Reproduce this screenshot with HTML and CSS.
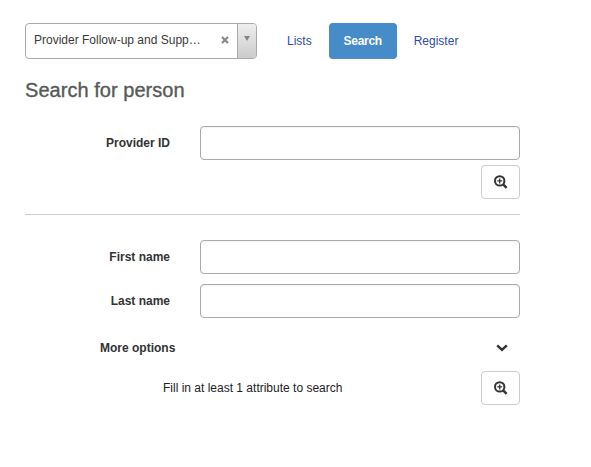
FILE: index.html
```html
<!DOCTYPE html>
<html lang="en">
<head>
<meta charset="utf-8">
<title>Search for person</title>
<link rel="stylesheet" href="styles.css">
</head>
<body>
<svg class="defs" width="0" height="0" aria-hidden="true">
  <symbol id="zoom-in" viewBox="0 0 14 14">
    <circle cx="5.7" cy="5.9" r="4.7" fill="none" stroke="currentColor" stroke-width="2"/>
    <path d="M9.2 9.4L12.6 12.8" fill="none" stroke="currentColor" stroke-width="2.5"/>
    <path d="M5.7 3.4V8.4M3.2 5.9H8.2" fill="none" stroke="currentColor" stroke-width="1.3"/>
  </symbol>
</svg>
<main class="page">
  <header class="toolbar">
    <div class="select">
      <span class="select-value">Provider Follow-up and Supp…</span>
      <svg class="select-clear" width="8" height="8" viewBox="0 0 8 8"><path d="M1 1L7 7M7 1L1 7" stroke="#888" stroke-width="2.2"/></svg>
      <span class="select-arrow"><svg width="6" height="5" viewBox="0 0 6 5"><path d="M0 0H6L3 5Z" fill="#858585"/></svg></span>
    </div>
    <nav class="tabs">
      <a class="tab tab-lists">Lists</a>
      <a class="tab tab-active">Search</a>
      <a class="tab tab-register">Register</a>
    </nav>
  </header>
  <h1 class="title">Search for person</h1>
  <form class="form">
    <div class="row"><label class="label" for="pid">Provider ID</label><input class="input" id="pid"></div>
    <div class="actions"><button class="button" type="button" aria-label="Search"><svg width="14" height="14"><use href="#zoom-in"/></svg></button></div>
    <hr class="divider">
    <div class="row"><label class="label" for="first">First name</label><input class="input" id="first"></div>
    <div class="row"><label class="label" for="last">Last name</label><input class="input" id="last"></div>
    <div class="more"><span>More options</span><svg width="12" height="8" viewBox="0 0 12 8"><path d="M1.2 1.3L6 5.8L10.8 1.3" fill="none" stroke="#333" stroke-width="2.5"/></svg></div>
    <div class="actions actions-last"><span class="hint">Fill in at least 1 attribute to search</span><button class="button" type="button" aria-label="Search"><svg width="14" height="14"><use href="#zoom-in"/></svg></button></div>
  </form>
</main>
</body>
</html>
```
FILE: styles.css
```css
* { box-sizing: border-box; }
body {
  margin: 0;
  background: #fff;
  color: #333;
  font: 12px/17px "Liberation Sans", Arial, sans-serif;
}
.defs { display: block; }
.page { width: 495px; margin-left: 25px; padding-top: 23px; }
.toolbar { display: flex; height: 36px; }
.select {
  display: flex;
  align-items: center;
  width: 232px;
  border: 1px solid #aaa;
  border-radius: 4px;
  overflow: hidden;
}
.select-value { width: 187px; padding: 0 0 2px 8px; color: #3a3a3a; white-space: nowrap; }
.select-clear { margin-left: 8px; margin-top: -3px; }
.select-arrow {
  display: flex;
  justify-content: center;
  width: 19px;
  height: 100%;
  margin-left: auto;
  padding-top: 12px;
  border-left: 1px solid #aaa;
  background: linear-gradient(#eee, #ccc);
}
.tabs { display: flex; margin-left: 30px; }
.tab { line-height: 36px; color: #2f4ba8; }
.tab-active {
  width: 68px;
  margin: 0 17px;
  border-radius: 4px;
  background: #468cc8;
  color: #fff;
  font-weight: bold;
  text-align: center;
  letter-spacing: -0.3px;
}
.title {
  margin: 19px 0 24px;
  color: #555a58;
  font-size: 20px;
  font-weight: normal;
  line-height: 24px;
  letter-spacing: 0.04px;
  -webkit-text-stroke: 0.35px #555a58;
}
.row { display: flex; align-items: center; height: 34px; margin-bottom: 10px; }
.label { width: 145px; margin-right: 30px; font-weight: bold; text-align: right; }
.input {
  width: 320px;
  height: 34px;
  border: 1px solid #aaa;
  border-radius: 4px;
  box-shadow: inset 0 1px 1px rgba(0, 0, 0, .05);
}
.actions { display: flex; align-items: center; justify-content: flex-end; margin-top: -5px; }
.button {
  display: flex;
  align-items: center;
  justify-content: center;
  width: 39px;
  height: 34px;
  padding: 0;
  border: 1px solid #ccc;
  border-radius: 4px;
  background: #fff;
  color: #333;
}
.divider { height: 1px; margin: 15px 0 25px; border: 0; background: #ccc; }
.more {
  display: flex;
  align-items: center;
  justify-content: space-between;
  height: 20px;
  margin-top: 20px;
  padding: 0 12px 0 75px;
  font-weight: bold;
}
.actions-last { margin-top: 13px; }
.hint { margin-right: auto; padding-left: 138px; color: #222; }
```
